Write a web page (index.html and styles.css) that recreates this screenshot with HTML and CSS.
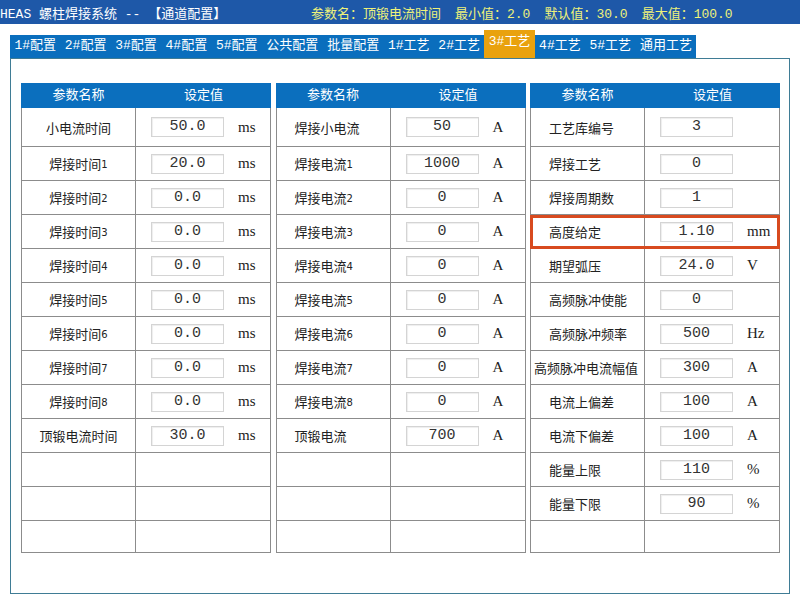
FILE: index.html
```html
<!DOCTYPE html>
<html lang="zh-CN">
<head>
    <meta charset="UTF-8">
    <title>HEAS 螺柱焊接系统</title>
    <link rel="stylesheet" href="styles.css">
</head>
<body>

<div class="titlebar">
    <div class="title">HEAS 螺柱焊接系统 -- 【通道配置】</div>
    <div class="param">参数名：顶锻电流时间</div>
    <div class="param">最小值：2.0</div>
    <div class="param">默认值：30.0</div>
    <div class="param">最大值：100.0</div>
</div>

<div class="tabs">
    <div class="tab">1#配置</div>
    <div class="tab">2#配置</div>
    <div class="tab">3#配置</div>
    <div class="tab">4#配置</div>
    <div class="tab">5#配置</div>
    <div class="tab">公共配置</div>
    <div class="tab">批量配置</div>
    <div class="tab">1#工艺</div>
    <div class="tab">2#工艺</div>
    <div class="tab active">3#工艺</div>
    <div class="tab">4#工艺</div>
    <div class="tab">5#工艺</div>
    <div class="tab">通用工艺</div>
</div>

<div class="panel">
    <!-- 通道参数 -->
    <div class="grid center">
        <div class="head"><div class="name">参数名称</div><div class="val">设定值</div></div>
        <div class="row first"><div class="name">小电流时间</div><div class="val"><span class="box">50.0</span><span class="unit">ms</span></div></div>
        <div class="row"><div class="name">焊接时间<span class="idx">1</span></div><div class="val"><span class="box">20.0</span><span class="unit">ms</span></div></div>
        <div class="row"><div class="name">焊接时间<span class="idx">2</span></div><div class="val"><span class="box">0.0</span><span class="unit">ms</span></div></div>
        <div class="row"><div class="name">焊接时间<span class="idx">3</span></div><div class="val"><span class="box">0.0</span><span class="unit">ms</span></div></div>
        <div class="row"><div class="name">焊接时间<span class="idx">4</span></div><div class="val"><span class="box">0.0</span><span class="unit">ms</span></div></div>
        <div class="row"><div class="name">焊接时间<span class="idx">5</span></div><div class="val"><span class="box">0.0</span><span class="unit">ms</span></div></div>
        <div class="row"><div class="name">焊接时间<span class="idx">6</span></div><div class="val"><span class="box">0.0</span><span class="unit">ms</span></div></div>
        <div class="row"><div class="name">焊接时间<span class="idx">7</span></div><div class="val"><span class="box">0.0</span><span class="unit">ms</span></div></div>
        <div class="row"><div class="name">焊接时间<span class="idx">8</span></div><div class="val"><span class="box">0.0</span><span class="unit">ms</span></div></div>
        <div class="row"><div class="name">顶锻电流时间</div><div class="val"><span class="box">30.0</span><span class="unit">ms</span></div></div>
        <div class="row"><div class="name"></div><div class="val"></div></div>
        <div class="row"><div class="name"></div><div class="val"></div></div>
        <div class="row last"><div class="name"></div><div class="val"></div></div>
    </div>

    <!-- 电流参数 -->
    <div class="grid">
        <div class="head"><div class="name">参数名称</div><div class="val">设定值</div></div>
        <div class="row first"><div class="name">焊接小电流</div><div class="val"><span class="box">50</span><span class="unit">A</span></div></div>
        <div class="row"><div class="name">焊接电流<span class="idx">1</span></div><div class="val"><span class="box">1000</span><span class="unit">A</span></div></div>
        <div class="row"><div class="name">焊接电流<span class="idx">2</span></div><div class="val"><span class="box">0</span><span class="unit">A</span></div></div>
        <div class="row"><div class="name">焊接电流<span class="idx">3</span></div><div class="val"><span class="box">0</span><span class="unit">A</span></div></div>
        <div class="row"><div class="name">焊接电流<span class="idx">4</span></div><div class="val"><span class="box">0</span><span class="unit">A</span></div></div>
        <div class="row"><div class="name">焊接电流<span class="idx">5</span></div><div class="val"><span class="box">0</span><span class="unit">A</span></div></div>
        <div class="row"><div class="name">焊接电流<span class="idx">6</span></div><div class="val"><span class="box">0</span><span class="unit">A</span></div></div>
        <div class="row"><div class="name">焊接电流<span class="idx">7</span></div><div class="val"><span class="box">0</span><span class="unit">A</span></div></div>
        <div class="row"><div class="name">焊接电流<span class="idx">8</span></div><div class="val"><span class="box">0</span><span class="unit">A</span></div></div>
        <div class="row"><div class="name">顶锻电流</div><div class="val"><span class="box">700</span><span class="unit">A</span></div></div>
        <div class="row"><div class="name"></div><div class="val"></div></div>
        <div class="row"><div class="name"></div><div class="val"></div></div>
        <div class="row last"><div class="name"></div><div class="val"></div></div>
    </div>

    <!-- 工艺参数 -->
    <div class="grid">
        <div class="head"><div class="name">参数名称</div><div class="val">设定值</div></div>
        <div class="row first"><div class="name">工艺库编号</div><div class="val"><span class="box">3</span></div></div>
        <div class="row"><div class="name">焊接工艺</div><div class="val"><span class="box">0</span></div></div>
        <div class="row"><div class="name">焊接周期数</div><div class="val"><span class="box">1</span></div></div>
        <div class="row selected"><div class="name">高度给定</div><div class="val"><span class="box">1.10</span><span class="unit">mm</span></div></div>
        <div class="row"><div class="name">期望弧压</div><div class="val"><span class="box">24.0</span><span class="unit">V</span></div></div>
        <div class="row"><div class="name">高频脉冲使能</div><div class="val"><span class="box">0</span></div></div>
        <div class="row"><div class="name">高频脉冲频率</div><div class="val"><span class="box">500</span><span class="unit">Hz</span></div></div>
        <div class="row"><div class="name long">高频脉冲电流幅值</div><div class="val"><span class="box">300</span><span class="unit">A</span></div></div>
        <div class="row"><div class="name">电流上偏差</div><div class="val"><span class="box">100</span><span class="unit">A</span></div></div>
        <div class="row"><div class="name">电流下偏差</div><div class="val"><span class="box">100</span><span class="unit">A</span></div></div>
        <div class="row"><div class="name">能量上限</div><div class="val"><span class="box">110</span><span class="unit">%</span></div></div>
        <div class="row"><div class="name">能量下限</div><div class="val"><span class="box">90</span><span class="unit">%</span></div></div>
        <div class="row last"><div class="name"></div><div class="val"></div></div>
    </div>
</div>

</body>
</html>
```

FILE: styles.css
```css
body {
    margin: 0;
    padding: 0;
    background-color: #fff;
    font-family: 'Liberation Mono', 'Noto Sans CJK SC', monospace;
    font-size: 13px;
    color: #222;
    overflow: hidden;
}

/* 顶部标题栏 */
.titlebar {
    display: flex;
    align-items: center;
    height: 24px;
    background-color: #1e58a8;
    color: #ffffff;
    white-space: nowrap;
}

.title {
    flex: 0 0 311px;
    font-size: 13px;
}

.param {
    color: #eef27a;
    margin-right: 14px;
}

/* 选项卡 */
.tabs {
    display: flex;
    align-items: flex-end;
    width: fit-content;
    height: 23px;
    margin: 11px 0 0 10px;
    background-color: #0a6ebd;
    color: #fff;
}

.tab {
    flex: none;
    height: 23px;
    line-height: 22px;
    padding: 0 4.4px;
    white-space: nowrap;
}

.tab.active {
    height: 28px;
    line-height: 24px;
    background-color: #e9a20e;
}

/* 参数面板 */
.panel {
    display: flex;
    gap: 4.5px;
    width: 768px;
    height: 510px;
    margin-left: 10px;
    padding: 24px 0 0 10px;
    border: 1px solid #3f7c95;
}

.grid {
    width: 250px;
}

.head,
.row {
    display: flex;
}

.head {
    height: 25px;
    line-height: 25px;
    background-color: #0b6fbe;
    color: #fff;
    text-align: center;
}

.head .name {
    width: 115px;
}

.head .val {
    flex: 1;
}

.row {
    height: 34px;
    border-left: 1px solid #8c8c8c;
    border-right: 1px solid #8c8c8c;
    border-bottom: 1px solid #8c8c8c;
    box-sizing: border-box;
}

.row.first {
    height: 39px;
}

.row.last {
    height: 32px;
}

.row .name {
    display: flex;
    align-items: center;
    width: 114px;
    padding-left: 18px;
    box-sizing: border-box;
    border-right: 1px solid #8c8c8c;
    white-space: nowrap;
    font-size: 13px;
}

.center .row .name {
    justify-content: center;
    padding-left: 0;
}

.row .name.long {
    padding-left: 3px;
}

.idx {
    font-size: 10px;
    font-family: 'DejaVu Sans', sans-serif;
    margin-top: 1px;
}

.row .val {
    display: flex;
    align-items: center;
    flex: 1;
    padding-left: 15px;
}

.box {
    width: 71px;
    height: 18px;
    line-height: 18px;
    border: 1px solid #d4d4d4;
    box-shadow: inset 1px 1px 1px #eeeeee;
    text-align: center;
    font-size: 15px;
    color: #333;
}

.unit {
    margin-left: 14px;
    font-family: 'Liberation Serif', serif;
    font-size: 15px;
}

/* 当前选中的参数 */
.row.selected {
    outline: 3px solid #d84a1f;
    outline-offset: -3px;
    position: relative;
    z-index: 1;
}
```
